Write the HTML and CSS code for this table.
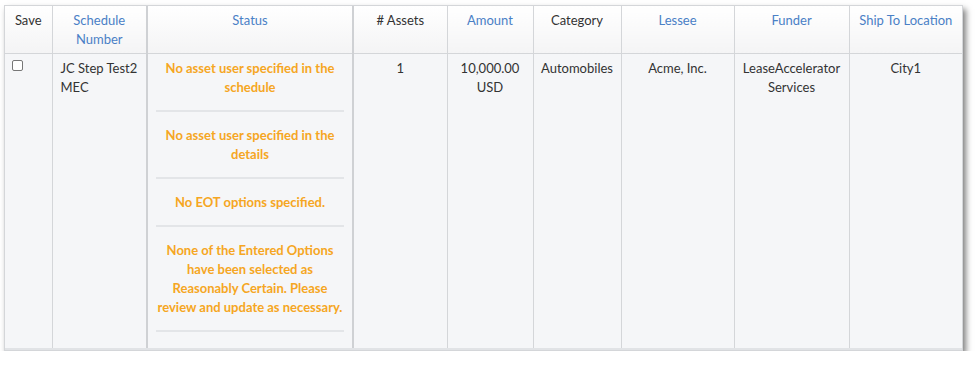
FILE: index.html
```html
<!DOCTYPE html>
<html lang="en">
<head>
    <meta charset="UTF-8">
    <title>Schedules</title>
    <link rel="stylesheet" href="styles.css">
</head>
<body>
    <div class="grid-wrap">
        <table class="grid">
            <colgroup>
                <col style="width:47px">
                <col style="width:95px">
                <col style="width:206px">
                <col style="width:94px">
                <col style="width:86px">
                <col style="width:88px">
                <col style="width:113px">
                <col style="width:115px">
                <col style="width:113px">
            </colgroup>
            <thead>
                <tr>
                    <th>Save</th>
                    <th class="sortable">Schedule Number</th>
                    <th class="sortable status-col">Status</th>
                    <th># Assets</th>
                    <th class="sortable">Amount</th>
                    <th>Category</th>
                    <th class="sortable">Lessee</th>
                    <th class="sortable">Funder</th>
                    <th class="sortable">Ship To Location</th>
                </tr>
            </thead>
            <tbody>
                <tr>
                    <td><span class="check"></span></td>
                    <td class="left">JC Step Test2 MEC</td>
                    <td class="status-col">
                        <div class="msg">No asset user specified in the schedule</div>
                        <div class="msg">No asset user specified in the details</div>
                        <div class="msg">No EOT options specified.</div>
                        <div class="msg">None of the Entered Options have been selected as Reasonably Certain. Please review and update as necessary.</div>
                    </td>
                    <td>1</td>
                    <td>10,000.00 USD</td>
                    <td>Automobiles</td>
                    <td>Acme, Inc.</td>
                    <td>LeaseAccelerator Services</td>
                    <td>City1</td>
                </tr>
            </tbody>
        </table>
    </div>
</body>
</html>
```

FILE: styles.css
```css
body {
    margin: 0;
    background: #fff;
    font-family: Lato, "Open Sans", sans-serif;
    font-size: 13px;
    line-height: 19px;
    color: #333;
}

.grid-wrap {
    width: 957px;
    margin: 5px 0 0 4px;
    border: 1px solid #d4d6d9;
    box-shadow: 3px 4px 6px rgba(0, 0, 0, 0.5);
}

.grid {
    width: 100%;
    border-collapse: collapse;
    table-layout: fixed;
}

.grid th {
    padding: 5px 6px 4px;
    font-weight: 400;
    text-align: center;
    vertical-align: top;
    background: linear-gradient(#fff, #f4f4f5);
    border-left: 1px solid #d4d6d9;
    border-bottom: 1px solid #d4d6d9;
    color: #333;
}

.grid th.sortable {
    color: #4a80c6;
}

.grid td {
    padding: 5px 6px 2px;
    text-align: center;
    vertical-align: top;
    background: #f5f6f8;
    border-left: 1px solid #d4d6d9;
    border-bottom: 2px solid #e1e3e6;
}

.grid th:first-child,
.grid td:first-child {
    border-left: none;
}

.grid td.left {
    text-align: left;
    padding-left: 8px;
}

.grid .status-col {
    border-left: 2px solid #cfd1d4;
    border-right: 2px solid #cfd1d4;
    padding-left: 8px;
    padding-right: 8px;
}

.msg {
    color: #f5a623;
    font-weight: 700;
    padding-bottom: 13px;
    border-bottom: 2px solid #e3e5e8;
    margin-bottom: 14px;
}

.check {
    display: block;
    width: 9px;
    height: 9px;
    margin: 1px 0 0 1px;
    border: 1px solid #777;
    border-radius: 2px;
    background: #fff;
}
```
